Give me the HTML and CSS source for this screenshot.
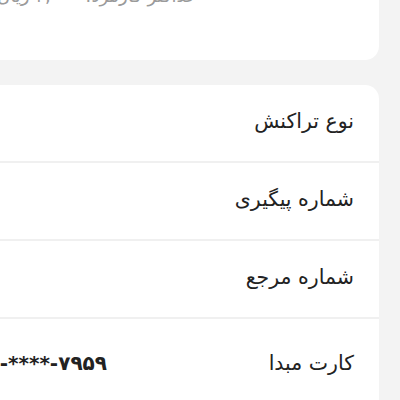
FILE: index.html
```html
<!DOCTYPE html>
<html lang="fa" dir="rtl">
<head>
<meta charset="utf-8">
<link rel="stylesheet" href="styles.css">
</head>
<body>
<div class="page">
  <div class="card fee-card">
    <div class="fee-text">حداکثر کارمزد: ۴,۰۰۰ ریال</div>
  </div>
  <div class="card details">
    <div class="row"><span class="label">نوع تراکنش</span><span class="value"></span></div>
    <div class="row"><span class="label">شماره پیگیری</span><span class="value"></span></div>
    <div class="row"><span class="label">شماره مرجع</span><span class="value"></span></div>
    <div class="row last"><span class="label">کارت مبدا</span><span class="value card-no">۶۰۳۷-****-****-۷۹۵۹</span></div>
  </div>
</div>
</body>
</html>
```
FILE: styles.css
```css
html, body {
  margin: 0;
  padding: 0;
  background: #f3f3f3;
  overflow: hidden;
}
body {
  font-family: "DejaVu Sans", "Noto Sans", sans-serif;
  color: #222;
}
.page {
  margin-top: -31px;
  padding-right: 21px;
  margin-left: -200px;
  display: flex;
  flex-direction: column;
  gap: 25px;
}
.card {
  background: #fff;
  border-radius: 14px;
}
.fee-card {
  padding: 14px 24px 51px 24px;
}
.fee-text {
  font-size: 18px;
  line-height: 26px;
  color: #9a9a9a;
  padding-right: 158px;
  white-space: nowrap;
}
.row {
  height: 76px;
  display: flex;
  align-items: center;
  justify-content: space-between;
  padding: 0 25px 0 24px;
  border-bottom: 2px solid #f0f0f0;
}
.row.last {
  border-bottom: none;
  height: 82px;
  padding-top: 5px;
  padding-bottom: 40px;
}
.label {
  font-size: 20.5px;
  white-space: nowrap;
  padding-bottom: 5px;
}
.value {
  width: 283px;
  direction: ltr;
  text-align: right;
  font-size: 20px;
  font-weight: bold;
  white-space: nowrap;
  padding-bottom: 5px;
}
```
